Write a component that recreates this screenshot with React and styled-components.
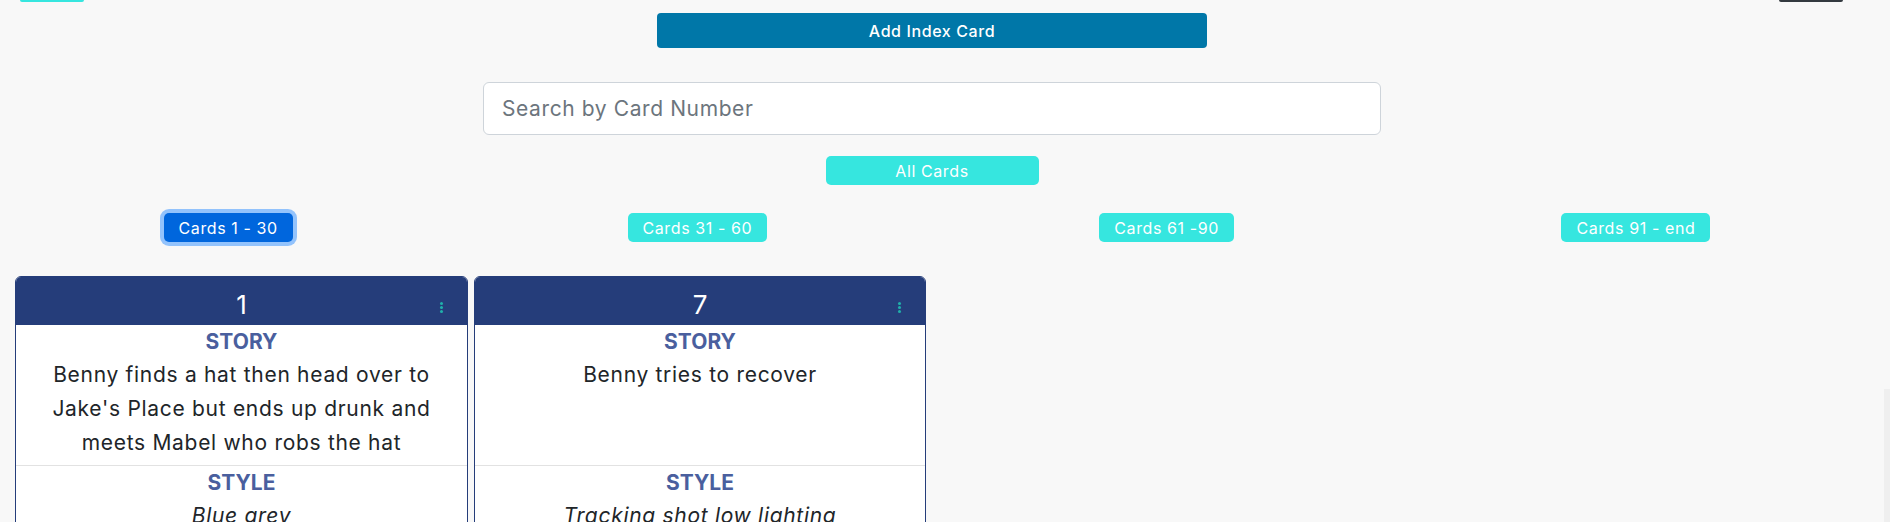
import React from "react";
import styled, { createGlobalStyle } from "styled-components";

const Global = createGlobalStyle`
  html, body { margin: 0; padding: 0; overflow: hidden; background: #f8f8f8; }
  body { font-family: Inter, "Noto Sans", Arial, sans-serif; color: #212529; }
  * { box-sizing: border-box; }
`;

const Page = styled.div`
  width: 1864px;
  display: flex;
  flex-direction: column;
`;

const TopStrip = styled.div`
  display: flex;
  justify-content: space-between;
  padding: 0 21px 0 20px;
  height: 2px;
`;

const Stub = styled.div`
  width: 64px;
  height: 2px;
  background: ${(p) => p.$color};
  border-radius: 0 0 3px 3px;
`;

const Center = styled.div`
  display: flex;
  flex-direction: column;
  align-items: center;
`;

const AddButton = styled.button`
  margin-top: 11px;
  width: 550px;
  height: 35px;
  border: none;
  border-radius: 4px;
  background: #0077a8;
  color: #fff;
  font-family: inherit;
  font-size: 16px;
  letter-spacing: 0.6px;
  font-weight: 500;
`;

const Search = styled.input`
  margin-top: 34px;
  width: 898px;
  height: 53px;
  border: 1px solid #ced4da;
  border-radius: 6px;
  background: #fff;
  padding: 0 18px;
  font-family: inherit;
  font-size: 21px;
  letter-spacing: 0.6px;
  color: #212529;
  &::placeholder { color: #6c757d; }
`;

const PillButton = styled.button`
  height: 29px;
  border: none;
  border-radius: 5px;
  background: ${(p) => (p.$active ? "#0066dd" : "#36e6df")};
  box-shadow: ${(p) => (p.$active ? "0 0 0 4px #93c3fc" : "none")};
  color: #fff;
  font-family: inherit;
  font-size: 16px;
  letter-spacing: 0.6px;
  font-weight: 400;
  padding: 0 15px;
  width: ${(p) => (p.$w ? `${p.$w}px` : "auto")};
  white-space: nowrap;
`;

const AllWrap = styled.div`
  margin-top: 21px;
`;

const RangeRow = styled.div`
  margin: 28px -6.5px 0;
  display: grid;
  grid-template-columns: repeat(4, 1fr);
`;

const RangeCell = styled.div`
  display: flex;
  justify-content: center;
`;

const CardsRow = styled.div`
  margin-top: 34px;
  padding-left: 15px;
  display: flex;
  gap: 6px;
  align-items: flex-start;
`;

const Card = styled.div`
  width: ${(p) => p.$w}px;
  background: #fff;
  border: 1px solid #253d7a;
  border-radius: 6px 6px 0 0;
  overflow: hidden;
`;

const CardHeader = styled.div`
  position: relative;
  height: 48px;
  background: #253d7a;
  color: #fff;
  text-align: center;
  font-size: 26px;
  line-height: 38px;
  padding-top: 9px;
`;

const Dots = styled.span`
  position: absolute;
  right: 24px;
  top: 25px;
  display: flex;
  flex-direction: column;
  gap: 1px;
  i {
    display: block;
    width: 3px;
    height: 3px;
    border-radius: 50%;
    background: #20b0aa;
  }
`;

const Section = styled.div`
  text-align: center;
  min-height: ${(p) => p.$min || 0}px;
  border-bottom: ${(p) => (p.$sep ? "1px solid #e2e2e2" : "none")};
  padding: 0 12px 4px;
`;

const Label = styled.div`
  font-size: 21px;
  font-weight: 700;
  color: #4a5f9e;
  line-height: 33px;
`;

const Body = styled.div`
  font-size: 21px;
  letter-spacing: 0.7px;
  line-height: 34px;
  color: #212529;
  font-style: ${(p) => (p.$italic ? "italic" : "normal")};
`;

const ScrollThumb = styled.div`
  position: fixed;
  right: 0;
  top: 389px;
  width: 6px;
  height: 133px;
  background: #efefef;
`;

const cards = [
  { n: 1, w: 453, story: "Benny finds a hat then head over to Jake's Place but ends up drunk and meets Mabel who robs the hat", style: "Blue grey" },
  { n: 7, w: 452, story: "Benny tries to recover", style: "Tracking shot low lighting" },
];

const ranges = [
  { t: "Cards 1 - 30", active: true },
  { t: "Cards 31 - 60" },
  { t: "Cards 61 -90" },
  { t: "Cards 91 - end" },
];

export default function App() {
  return (
    <Page>
      <Global />
      <TopStrip>
        <Stub $color="#36e6df" />
        <Stub $color="#343a40" />
      </TopStrip>
      <Center>
        <AddButton>Add Index Card</AddButton>
        <Search placeholder="Search by Card Number" />
        <AllWrap>
          <PillButton $w={213}>All Cards</PillButton>
        </AllWrap>
      </Center>
      <RangeRow>
        {ranges.map((r) => (
          <RangeCell key={r.t}>
            <PillButton $active={r.active}>{r.t}</PillButton>
          </RangeCell>
        ))}
      </RangeRow>
      <CardsRow>
        {cards.map((c) => (
          <Card key={c.n} $w={c.w}>
            <CardHeader>
              {c.n}
              <Dots><i /><i /><i /></Dots>
            </CardHeader>
            <Section $sep $min={141}>
              <Label>STORY</Label>
              <Body>{c.story}</Body>
            </Section>
            <Section>
              <Label>STYLE</Label>
              <Body $italic>{c.style}</Body>
            </Section>
          </Card>
        ))}
      </CardsRow>
      <ScrollThumb />
    </Page>
  );
}
